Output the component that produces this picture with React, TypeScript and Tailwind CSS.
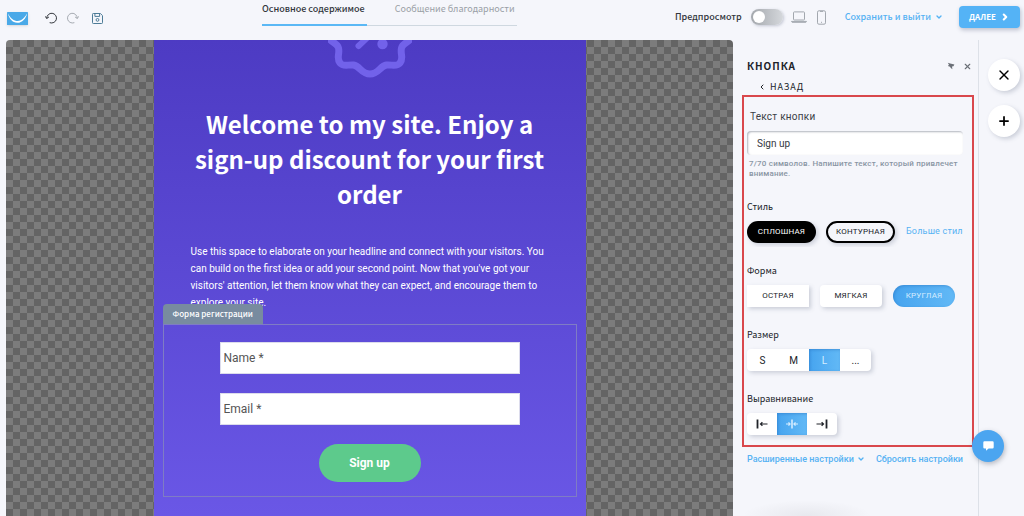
import { useState } from "react";
import type { ReactNode } from "react";
import { ChevronDown, ChevronLeft, ChevronRight, Plus, X } from "lucide-react";

const sans = "font-['Noto_Sans_CJK_SC',sans-serif]";
const roboto = "font-['Roboto',sans-serif]";
const raised = "shadow-[2px_2px_4px_rgba(80,90,120,0.25)]";
const active =
  "bg-gradient-to-r from-[#46a4ef] to-[#62b9f6] text-[#d6edff] shadow-[inset_1px_1px_3px_rgba(30,100,180,0.4)]";

function Logo() {
  return (
    <svg viewBox="0 0 21 13" className="h-[13px] w-[21px] shadow-sm" aria-hidden="true">
      <rect width="21" height="13" rx="0.6" fill="#4aa9e8" />
      <path
        d="M0.8 1.2C4 7.8 9.5 10.5 13.8 8.2C16.6 6.7 18.5 4.3 20.2 1.2C19 6.8 14.8 11 10.3 10.8C5.5 10.6 2.2 6.7 0.8 1.2Z"
        fill="#fff"
      />
    </svg>
  );
}

function UndoIcon({ className }: { className?: string }) {
  return (
    <svg viewBox="0 0 12 12" className={`h-3 w-3 ${className ?? ""}`} fill="none" stroke="currentColor" strokeLinecap="round" strokeLinejoin="round" aria-hidden="true">
      <path d="M1.7 6.2A4.9 4.9 0 1 1 5 10.8" />
      <path d="M0.4 4.6L1.7 6.4L3.6 5.2" />
    </svg>
  );
}

function SaveIcon() {
  return (
    <svg viewBox="0 0 11 11" className="h-[11px] w-[11px]" fill="none" stroke="#4d7c97" aria-hidden="true">
      <path d="M1.3 0.5H8.4L10.5 2.6V9.7Q10.5 10.5 9.7 10.5H1.3Q0.5 10.5 0.5 9.7V1.3Q0.5 0.5 1.3 0.5Z" />
      <path d="M2.9 0.7V3.4H7.6V0.7" />
      <circle cx="5.5" cy="6.9" r="1.4" />
    </svg>
  );
}

function LaptopIcon() {
  return (
    <svg viewBox="0 0 16 12" className="h-3 w-4" fill="none" stroke="#a2a7ae" aria-hidden="true">
      <rect x="2.5" y="0.9" width="11" height="8.1" rx="0.8" />
      <path d="M0.5 10.4H15.5L14.9 11.3H1.1Z" />
    </svg>
  );
}

function PhoneIcon() {
  return (
    <svg viewBox="0 0 9 15" className="h-[15px] w-[9px]" fill="none" stroke="#a2a7ae" aria-hidden="true">
      <rect x="0.5" y="0.8" width="8" height="13.4" rx="1.4" />
      <path d="M3 1.4H6M4 12.3H5" />
    </svg>
  );
}

function PinIcon() {
  return (
    <svg viewBox="0 0 8 8" className="h-2 w-2" aria-hidden="true">
      <path d="M0.8 0.8L3.2 1.6L7.4 2.6L6.4 4.2L5 4.6L5.4 7.2L3.8 6L3 4.8L0.9 3.9L2 2.8Z" fill="#6b7077" />
    </svg>
  );
}

function DiscountBadge() {
  return (
    <svg viewBox="0 0 84 38" className="mx-auto block h-[38px] w-[84px]" fill="none" stroke="#7262ea" strokeWidth="7" strokeLinecap="round" aria-hidden="true">
      <path d="M0 -4C2 3 9 2 10.500 8C12 14 8 18 12 23C15 27 20 24.500 25.500 25C32 26 33.500 34 42 34C50.500 34 52 26 58.500 25C64 24.500 69 27 72 23C76 18 72 14 73.500 8C75 2 82 3 84 -4" />
      <path d="M30.500 6L41 -4" strokeWidth="6" />
      <circle cx="54.500" cy="4" r="5.200" fill="#7262ea" stroke="none" />
    </svg>
  );
}

function AlignIcon({ kind }: { kind: string }) {
  return (
    <svg viewBox="0 0 12 10" className="h-[10px] w-3" fill="none" stroke="currentColor" strokeWidth="1.200" aria-hidden="true">
      {kind === "left" && (
        <>
          <path d="M1.500 0.500V9.500" strokeWidth="1.800" />
          <path d="M11.500 5H4.500M6.400 3.200L4.500 5L6.400 6.800" />
        </>
      )}
      {kind === "center" && (
        <>
          <path d="M6 0.500V9.500" strokeWidth="1.600" />
          <path d="M0 5H4M2.500 3.400L4.100 5L2.500 6.600M12 5H8M9.500 3.400L7.900 5L9.500 6.600" />
        </>
      )}
      {kind === "right" && (
        <>
          <path d="M10.500 0.500V9.500" strokeWidth="1.800" />
          <path d="M0.500 5H7.500M5.600 3.200L7.500 5L5.600 6.800" />
        </>
      )}
    </svg>
  );
}

function Header() {
  return (
    <header className={`flex h-10 shrink-0 text-[#33373d] ${sans}`}>
      <div className="flex h-9 w-[262px] shrink-0 items-center pl-[7px]">
        <Logo />
        <button aria-label="Отменить" className="ml-[17px]">
          <UndoIcon />
        </button>
        <button aria-label="Повторить" className="ml-[10px] text-[#a5aab1]">
          <UndoIcon className="-scale-x-100" />
        </button>
        <button aria-label="Сохранить" className="ml-[13px]">
          <SaveIcon />
        </button>
      </div>

      <nav className="flex h-[26px] whitespace-nowrap text-[9px] leading-[18px]">
        <a href="#content" className="border-b-2 border-[#5bb8f5] pr-[2px] font-medium">
          Основное содержимое
        </a>
        <a href="#thanks" className="border-b border-[#cfd8e0] pr-[2px] pl-7 text-[#9a9fa6]">
          Сообщение благодарности
        </a>
      </nav>

      <div className="ml-auto flex h-[34px] items-center pr-1 text-[9px] whitespace-nowrap">
        <label htmlFor="preview" className="font-medium">
          Предпросмотр
        </label>
        <input
          id="preview"
          type="checkbox"
          role="switch"
          className="ml-[9px] h-4 w-8 appearance-none rounded-full bg-gradient-to-r from-[#a4a8ad] to-[#d5d8dc] p-[2px] shadow-[1px_1px_3px_rgba(80,90,120,0.3)] before:block before:size-3 before:rounded-full before:bg-white checked:before:translate-x-4"
        />
        <button aria-label="Компьютер" className="ml-2">
          <LaptopIcon />
        </button>
        <button aria-label="Телефон" className="ml-[10px]">
          <PhoneIcon />
        </button>
        <button className="ml-[19px] flex items-center gap-1 font-medium text-[#55b2f3]">
          Сохранить и выйти
          <ChevronDown className="size-2" strokeWidth={4} />
        </button>
        <button className="ml-4 flex h-[22px] w-[61px] items-center justify-center gap-1 rounded bg-[#54b3f6] text-[8px] font-bold text-white shadow-[1px_2px_4px_rgba(80,90,120,0.35)]">
          ДАЛЕЕ
          <ChevronRight className="size-[10px]" strokeWidth={5} />
        </button>
      </div>
    </header>
  );
}

function Canvas() {
  return (
    <main className="min-w-0 flex-1 overflow-hidden rounded-t bg-[repeating-conic-gradient(#646464_0_25%,#7c7c7c_0_50%)] bg-[length:14px_14px]">
      <div className={`mx-auto h-full max-w-[432px] bg-gradient-to-b from-[#4d3bc3] to-[#6a57e6] text-white ${roboto}`}>
        <DiscountBadge />
        <h1 className={`mx-auto mt-7 w-[360px] text-center text-[24px] leading-[35px] font-bold ${sans}`}>
          Welcome to my site. Enjoy a sign-up discount for your first order
        </h1>
        <p className="mx-auto mt-8 w-[358px] text-[10px] leading-[17px]">
          Use this space to elaborate on your headline and connect with your visitors. You can build on the first
          idea or add your second point. Now that you've got your visitors' attention, let them know what they can
          expect, and encourage them to explore your site.
        </p>

        <div className="mx-[9px] -mt-[7px]">
          <div className={`relative w-fit rounded-t-sm bg-[#788b9f] px-[10px] text-[8px] leading-5 font-medium ${sans}`}>
            Форма регистрации
          </div>
          <form className="flex flex-col items-center border border-[#7f7cc4] pt-[17px] pb-[14px]">
            <input
              aria-label="Name"
              placeholder="Name *"
              className="h-8 w-[300px] border border-[#dcdcec] bg-white px-[3px] text-xs text-black placeholder:text-[#555]"
            />
            <input
              aria-label="Email"
              placeholder="Email *"
              className="mt-[19px] h-8 w-[300px] border border-[#dcdcec] bg-white px-[3px] text-xs text-black placeholder:text-[#555]"
            />
            <button type="button" className="mt-[19px] h-[38px] w-[102px] rounded-full bg-[#5dca8c] text-xs font-bold">
              Sign up
            </button>
          </form>
        </div>
      </div>
    </main>
  );
}

function Field({ title, children }: { title: string; children: ReactNode }) {
  return (
    <fieldset>
      <legend className={`text-[9px] leading-4 text-[#202329] ${sans}`}>{title}</legend>
      <div className="mt-[6px] flex">{children}</div>
    </fieldset>
  );
}

const sizes = ["S", "M", "L", "..."];

const aligns = [
  { kind: "left", label: "По левому краю" },
  { kind: "center", label: "По центру" },
  { kind: "right", label: "По правому краю" },
];

function SettingsPanel() {
  const [text, setText] = useState("Sign up");
  const [size, setSize] = useState("L");
  const [align, setAlign] = useState("center");

  return (
    <aside className={`flex w-[245px] shrink-0 flex-col pt-[18px] pr-[6px] pl-[9px] text-[#202329] ${roboto}`}>
      <div className="flex items-center pl-[5px]">
        <h2 className={`text-[10px] leading-4 font-bold tracking-widest ${sans}`}>КНОПКА</h2>
        <button aria-label="Закрепить" className="ml-auto">
          <PinIcon />
        </button>
        <button aria-label="Закрыть" className="ml-2 text-[#6b7077]">
          <X className="size-[9px]" strokeWidth={3} />
        </button>
      </div>
      <button className={`mt-[5px] ml-4 flex items-center gap-1 text-[9px] leading-4 tracking-widest ${sans}`}>
        <ChevronLeft className="size-2" strokeWidth={3} />
        НАЗАД
      </button>

      {/* highlighted settings group */}
      <section className="h-[352px] w-[232px] border-2 border-[#d9484c] pt-[12px] pl-[3px]">
        <label htmlFor="button-text" className="ml-[3px] block text-[10px] leading-4 tracking-wide text-[#3b3f46]">
          Текст кнопки
        </label>
        <input
          id="button-text"
          value={text}
          maxLength={70}
          onChange={(e) => setText(e.target.value)}
          className="mt-[6px] block h-6 w-[216px] rounded bg-white px-[10px] text-[10px] text-[#33373d] shadow-[inset_1px_1px_2px_rgba(60,70,90,0.4)]"
        />
        <p className="mt-1 w-[216px] pl-[2px] text-[8px] leading-[10px] font-medium tracking-wide text-[#8995a3]">
          7/70 символов. Напишите текст, который привлечет внимание.
        </p>

        <div className="mt-5 flex flex-col gap-5">
          <Field title="Стиль">
            <div className="-mb-1 flex w-[216px] items-center overflow-hidden pb-1 text-[8px] tracking-wide whitespace-nowrap">
              <button className={`h-[22px] w-[69px] shrink-0 rounded-full bg-black text-white ${raised}`}>СПЛОШНАЯ</button>
              <button className={`ml-[10px] h-[22px] w-[69px] shrink-0 rounded-full border-2 border-black ${raised}`}>
                КОНТУРНАЯ
              </button>
              <a href="#styles" className="ml-[11px] text-[9px] text-[#55b2f3]">
                Больше стилей
              </a>
            </div>
          </Field>
          <Field title="Форма">
            <div className="flex gap-[11px] text-[8px] tracking-wide">
              <button className={`h-[22px] w-[62px] bg-white ${raised}`}>ОСТРАЯ</button>
              <button className={`h-[22px] w-[62px] rounded bg-white ${raised}`}>МЯГКАЯ</button>
              <button className={`h-[22px] w-[62px] rounded-full ${active}`}>КРУГЛАЯ</button>
            </div>
          </Field>
          <Field title="Размер">
            <div className={`flex overflow-hidden rounded bg-white text-[10px] ${raised}`}>
              {sizes.map((s) => (
                <button key={s} onClick={() => setSize(s)} className={`h-[22px] w-[31px] ${s === size ? active : ""}`}>
                  {s}
                </button>
              ))}
            </div>
          </Field>
          <Field title="Выравнивание">
            <div className={`flex overflow-hidden rounded bg-white ${raised}`}>
              {aligns.map((a) => (
                <button
                  key={a.kind}
                  aria-label={a.label}
                  onClick={() => setAlign(a.kind)}
                  className={`flex h-[22px] w-[30px] items-center justify-center ${a.kind === align ? active : ""}`}
                >
                  <AlignIcon kind={a.kind} />
                </button>
              ))}
            </div>
          </Field>
        </div>
      </section>

      <div className="mt-1 flex justify-between pr-[9px] pl-[5px] text-[9px] leading-4 font-medium whitespace-nowrap text-[#55b2f3]">
        <button className="flex items-center gap-[3px]">
          Расширенные настройки
          <ChevronDown className="size-2" strokeWidth={4} />
        </button>
        <button>Сбросить настройки</button>
      </div>

      <div className="mt-auto h-4 w-[130px] bg-[radial-gradient(ellipse_at_bottom,rgba(70,70,80,0.08),transparent_70%)]" />
    </aside>
  );
}

function ToolRail() {
  return (
    <div className="relative flex w-[46px] shrink-0 flex-col items-end gap-[14px] border-l border-[#dde1e8] pt-[19px] pr-1">
      <button aria-label="Закрыть панель" className={`flex size-8 items-center justify-center rounded-full bg-white ${raised}`}>
        <X className="size-4" strokeWidth={2} />
      </button>
      <button aria-label="Добавить" className={`flex size-8 items-center justify-center rounded-full bg-white ${raised}`}>
        <Plus className="size-[14px]" strokeWidth={3} />
      </button>
      <button
        aria-label="Чат"
        className="absolute bottom-[54px] -left-[7px] flex size-8 items-center justify-center rounded-full bg-[#4ba5f0] shadow-[1px_2px_5px_rgba(60,70,90,0.35)]"
      >
        <svg viewBox="0 0 11 10" className="h-[10px] w-[11px]" fill="#fff" aria-hidden="true">
          <path d="M1.500 0.300H9.500Q10.700 0.300 10.700 1.500V6.200Q10.700 7.400 9.500 7.400H5.600L3 9.700V7.400H1.500Q0.300 7.400 0.300 6.200V1.500Q0.300 0.300 1.500 0.300Z" />
        </svg>
      </button>
    </div>
  );
}

export default function App() {
  return (
    <div className="flex h-screen flex-col overflow-hidden bg-[#f5f6fb]">
      <Header />
      <div className="flex min-h-0 flex-1 pl-[6px]">
        <Canvas />
        <SettingsPanel />
        <ToolRail />
      </div>
    </div>
  );
}
